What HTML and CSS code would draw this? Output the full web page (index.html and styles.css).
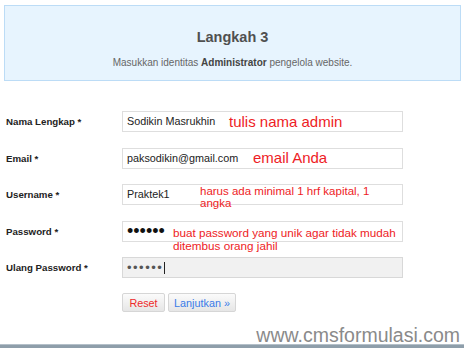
FILE: index.html
```html
<!DOCTYPE html>
<html lang="id">
<head>
    <meta charset="UTF-8">
    <title>Langkah 3 - Instalasi</title>
    <link rel="stylesheet" href="styles.css">
</head>
<body>
    <div class="page">
        <div class="step-box">
            <div class="step-title">Langkah 3</div>
            <div class="step-text">Masukkan identitas <b>Administrator</b> pengelola website.</div>
        </div>

        <div class="form">
            <div class="row">
                <div class="label">Nama Lengkap *</div>
                <div class="field">
                    <div class="input">Sodikin Masrukhin</div>
                    <div class="note note-name">tulis nama admin</div>
                </div>
            </div>

            <div class="row">
                <div class="label">Email *</div>
                <div class="field">
                    <div class="input">paksodikin@gmail.com</div>
                    <div class="note note-email">email Anda</div>
                </div>
            </div>

            <div class="row">
                <div class="label">Username *</div>
                <div class="field">
                    <div class="input">Praktek1</div>
                    <div class="note note-user">harus ada minimal 1 hrf kapital, 1<br>angka</div>
                </div>
            </div>

            <div class="row">
                <div class="label">Password *</div>
                <div class="field">
                    <div class="input"><span class="dots">••••••</span></div>
                    <div class="note note-pass">buat password yang unik agar tidak mudah<br>ditembus orang jahil</div>
                </div>
            </div>

            <div class="row">
                <div class="label">Ulang Password *</div>
                <div class="field">
                    <div class="input input-focus"><span class="dots dots-small">••••••</span><span class="caret"></span></div>
                </div>
            </div>

            <div class="buttons">
                <button class="button reset-button">Reset</button>
                <button class="button next-button">Lanjutkan »</button>
            </div>
        </div>

        <div class="footer">
            <div class="watermark">www.cmsformulasi.com</div>
            <div class="bottom-bar"></div>
        </div>
    </div>
</body>
</html>
```

FILE: styles.css
```css
* {
    margin: 0;
    padding: 0;
    box-sizing: border-box;
}

body {
    font-family: "Liberation Sans", Arial, sans-serif;
    background: white;
    color: #222;
}

.page {
    width: 464px;
    height: 348px;
    display: flex;
    flex-direction: column;
    overflow: hidden;
}

.step-box {
    margin: 5px 3px 0 4px;
    height: 76px;
    background: #e7f4fe;
    border: 1px solid #bcdcf6;
    text-align: center;
    padding-top: 23px;
}

.step-title {
    font-size: 14.5px;
    line-height: 17px;
    font-weight: bold;
    color: #505050;
}

.step-text {
    margin-top: 11px;
    font-size: 10px;
    line-height: 12px;
    color: #666;
}

.step-text b {
    color: #444;
}

.form {
    margin-top: 30px;
}

.row {
    display: flex;
    align-items: center;
    height: 21px;
    margin-bottom: 15.5px;
}

.label {
    width: 122px;
    padding-left: 6px;
    font-size: 9.7px;
    font-weight: bold;
    color: #222;
}

.field {
    position: relative;
    width: 281px;
    height: 21px;
}

.input {
    height: 21px;
    border: 1px solid #dedede;
    background: white;
    padding-left: 4px;
    font-size: 10.8px;
    line-height: 19px;
    color: #222;
    display: flex;
    align-items: center;
}

.input-focus {
    background: #f1f1f1;
    border-color: #d8d8d8;
}

.dots {
    font-size: 18px;
    line-height: 19px;
    color: #111;
}

.dots-small {
    font-size: 13px;
    letter-spacing: 1.5px;
    color: #555;
}

.caret {
    display: inline-block;
    width: 1px;
    height: 12px;
    background: #222;
    margin-left: 1px;
}

.note {
    position: absolute;
    color: #ee1c25;
    white-space: nowrap;
}

.note-name {
    left: 107px;
    top: 3px;
    font-size: 15px;
    line-height: 15px;
}

.note-email {
    left: 131px;
    top: 2px;
    font-size: 15px;
    line-height: 15px;
}

.note-user {
    left: 78px;
    top: 2px;
    font-size: 11.5px;
    line-height: 11.5px;
}

.note-pass {
    left: 51px;
    top: 5px;
    font-size: 11.7px;
    line-height: 13.3px;
}

.buttons {
    display: flex;
    gap: 3px;
    padding-left: 122px;
    margin-top: -0.5px;
}

.button {
    height: 19px;
    border: 1px solid #d6d6d6;
    border-radius: 2px;
    background: linear-gradient(#fbfbfb, #e6e6e6);
    font-family: "Liberation Sans", Arial, sans-serif;
    font-size: 10.8px;
    padding: 0;
}

.reset-button {
    width: 43px;
    color: #ee2a2a;
}

.next-button {
    width: 68px;
    color: #3a7be8;
}

.footer {
    margin-top: auto;
}

.watermark {
    text-align: right;
    padding-right: 4px;
    font-size: 19.5px;
    line-height: 17px;
    color: #8a8a8a;
}

.bottom-bar {
    height: 4px;
    background: #8e9eaa;
    border-top: 1px solid #b4c0c9;
}
```
